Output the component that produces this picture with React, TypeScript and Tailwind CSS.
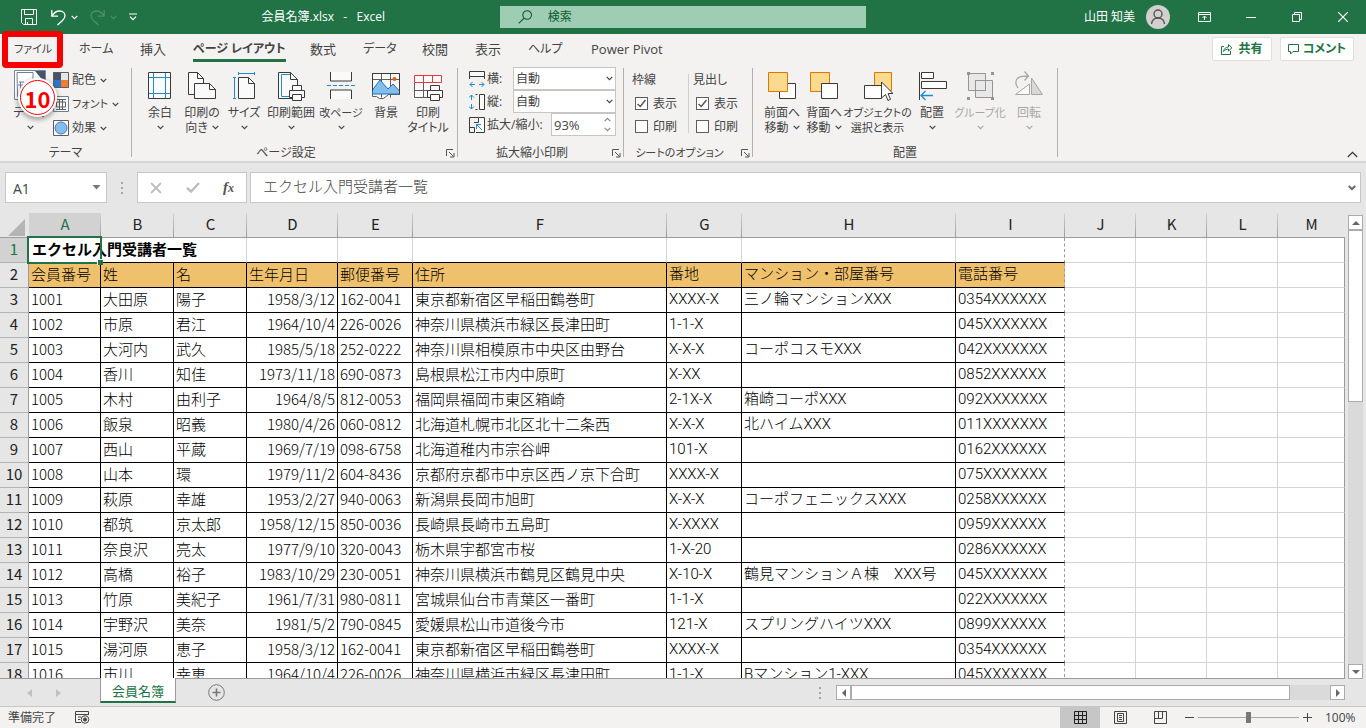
import type { ReactNode } from 'react';

const UI = 'font-["Open_Sans","Noto_Sans_CJK_JP",sans-serif]';

const tabs = [
  { name: 'ファイル', width: 'w-[65px]', size: 'text-[11px]' },
  { name: 'ホーム', width: 'w-[61px]', size: 'text-[12px]' },
  { name: '挿入', width: 'w-[53px]', size: 'text-[13px]' },
  { name: 'ページ レイアウト', width: 'w-[117px]', size: 'text-[12px]', active: true },
  { name: '数式', width: 'w-[53px]', size: 'text-[13px]' },
  { name: 'データ', width: 'w-[59px]', size: 'text-[12px]' },
  { name: '校閲', width: 'w-[53px]', size: 'text-[13px]' },
  { name: '表示', width: 'w-[53px]', size: 'text-[13px]' },
  { name: 'ヘルプ', width: 'w-[63px]', size: 'text-[12px]' },
  { name: 'Power Pivot', width: 'w-[90px]', size: 'text-[13px]' },
];

const columns = [
  { name: 'A', width: 'w-[72px]' },
  { name: 'B', width: 'w-[73px]' },
  { name: 'C', width: 'w-[73px]' },
  { name: 'D', width: 'w-[91px]' },
  { name: 'E', width: 'w-[75px]' },
  { name: 'F', width: 'w-[254px]' },
  { name: 'G', width: 'w-[75px]' },
  { name: 'H', width: 'w-[214px]' },
  { name: 'I', width: 'w-[109px]' },
  { name: 'J', width: 'w-[71px]' },
  { name: 'K', width: 'w-[71px]' },
  { name: 'L', width: 'w-[71px]' },
  { name: 'M', width: '' },
];

const headings = ['会員番号', '姓', '名', '生年月日', '郵便番号', '住所', '番地', 'マンション・部屋番号', '電話番号'];

const members = [
  ['1001', '大田原', '陽子', '1958/3/12', '162-0041', '東京都新宿区早稲田鶴巻町', 'XXXX-X', '三ノ輪マンションXXX', '0354XXXXXX'],
  ['1002', '市原', '君江', '1964/10/4', '226-0026', '神奈川県横浜市緑区長津田町', '1-1-X', '', '045XXXXXXX'],
  ['1003', '大河内', '武久', '1985/5/18', '252-0222', '神奈川県相模原市中央区由野台', 'X-X-X', 'コーポコスモXXX', '042XXXXXXX'],
  ['1004', '香川', '知佳', '1973/11/18', '690-0873', '島根県松江市内中原町', 'X-XX', '', '0852XXXXXX'],
  ['1005', '木村', '由利子', '1964/8/5', '812-0053', '福岡県福岡市東区箱崎', '2-1X-X', '箱崎コーポXXX', '092XXXXXXX'],
  ['1006', '飯泉', '昭義', '1980/4/26', '060-0812', '北海道札幌市北区北十二条西', 'X-X-X', '北ハイムXXX', '011XXXXXXX'],
  ['1007', '西山', '平蔵', '1969/7/19', '098-6758', '北海道稚内市宗谷岬', '101-X', '', '0162XXXXXX'],
  ['1008', '山本', '環', '1979/11/2', '604-8436', '京都府京都市中京区西ノ京下合町', 'XXXX-X', '', '075XXXXXXX'],
  ['1009', '萩原', '幸雄', '1953/2/27', '940-0063', '新潟県長岡市旭町', 'X-X-X', 'コーポフェニックスXXX', '0258XXXXXX'],
  ['1010', '都筑', '京太郎', '1958/12/15', '850-0036', '長崎県長崎市五島町', 'X-XXXX', '', '0959XXXXXX'],
  ['1011', '奈良沢', '亮太', '1977/9/10', '320-0043', '栃木県宇都宮市桜', '1-X-20', '', '0286XXXXXX'],
  ['1012', '高橋', '裕子', '1983/10/29', '230-0051', '神奈川県横浜市鶴見区鶴見中央', 'X-10-X', '鶴見マンションＡ棟　XXX号', '045XXXXXXX'],
  ['1013', '竹原', '美紀子', '1961/7/31', '980-0811', '宮城県仙台市青葉区一番町', '1-1-X', '', '022XXXXXXX'],
  ['1014', '宇野沢', '美奈', '1981/5/2', '790-0845', '愛媛県松山市道後今市', '121-X', 'スプリングハイツXXX', '0899XXXXXX'],
  ['1015', '湯河原', '恵子', '1958/3/12', '162-0041', '東京都新宿区早稲田鶴巻町', 'XXXX-X', '', '0354XXXXXX'],
  ['1016', '市川', '幸恵', '1964/10/4', '226-0026', '神奈川県横浜市緑区長津田町', '1-1-X', 'Bマンション1-XXX', '045XXXXXXX'],
];

function Chevron({ className = '' }: { className?: string }) {
  return (
    <svg className={`shrink-0 ${className}`} width="7" height="5" viewBox="0 0 7 5" fill="none" stroke="currentColor" strokeWidth="1.2">
      <path d="M.7.9 3.5 3.7 6.3.9" />
    </svg>
  );
}

/* ---------- title bar ---------- */

function TitleBar() {
  return (
    <header className="flex h-[34px] shrink-0 items-center bg-[#217346] text-[12px] text-white">
      <div className="flex flex-1 items-center">
        <button aria-label="上書き保存" className="ml-[21px]">
          <svg width="16" height="16" viewBox="0 0 16 16" fill="none" stroke="currentColor">
            <path d="M.5.5h15v15H2.5l-2-2zM3.5.5v5h9v-5M4.5 15.5v-6h7v6M6.500 13v2.500" />
          </svg>
        </button>
        <button aria-label="元に戻す" className="ml-[14px] flex items-center gap-[5px]">
          <svg width="15" height="17" viewBox="0 0 15 17" fill="none" stroke="currentColor" strokeWidth="1.3">
            <path d="M.8 1v6.200H7M1 7C3 3.500 6 2 8.500 2c3.500 0 5.500 2.300 5.500 4.800 0 2-1 3.200-2.500 4.700L6.500 16" />
          </svg>
          <Chevron />
        </button>
        <button aria-label="やり直し" className="ml-3 flex items-center gap-[5px] text-[#4e9069]">
          <svg width="15" height="17" viewBox="0 0 15 17" fill="none" stroke="currentColor" strokeWidth="1.3">
            <path d="M14.200 1v6.200H8M14 7C12 3.500 9 2 6.500 2 3 2 1 4.300 1 6.800c0 2 1 3.200 2.500 4.700L8.500 16" />
          </svg>
          <Chevron />
        </button>
        <button aria-label="クイック アクセス ツール バーのユーザー設定" className="ml-3">
          <svg width="8" height="8" viewBox="0 0 8 8" fill="none" stroke="currentColor" strokeWidth="1.2">
            <path d="M0 1h8M1 3.700l3 3 3-3" />
          </svg>
        </button>
        <h1 className="ml-auto mr-[115px] whitespace-pre">会員名簿.xlsx   -   Excel</h1>
      </div>
      <label className="flex h-[22px] w-[366px] items-center bg-[#9fcdb3] pl-[18px] text-[#0b5a30]">
        <svg width="16" height="16" viewBox="0 0 16 16" fill="none" stroke="currentColor" strokeWidth="1.2">
          <circle cx="10" cy="5.800" r="4.700" />
          <path d="M6.700 9.200.8 15" />
        </svg>
        <input aria-label="検索" placeholder="検索" className="ml-[15px] w-full bg-transparent outline-none placeholder:text-[#0b5a30]" />
      </label>
      <div className="flex flex-1 items-center justify-end">
        <span>山田 知美</span>
        <svg className="ml-[11px]" width="24" height="24" viewBox="0 0 24 24" fill="none" stroke="#555" strokeWidth="1.400">
          <circle cx="12" cy="12" r="12" fill="#d2d0ce" stroke="none" />
          <circle cx="12" cy="9" r="4" />
          <path d="M5.500 19c.5-4 3-6 6.500-6s6 2 6.500 6" />
        </svg>
        <button aria-label="リボンの表示オプション" className="ml-7">
          <svg width="13" height="10" viewBox="0 0 13 10" fill="none" stroke="currentColor">
            <path d="M.5.5h12v9H.5zM.5 2.500h12M6.500 8V4.200M4.500 6l2-2 2 2" />
          </svg>
        </button>
        <button aria-label="最小化" className="ml-[35px]">
          <svg width="10" height="10" viewBox="0 0 10 10" stroke="currentColor"><path d="M0 5.500h10" /></svg>
        </button>
        <button aria-label="元のサイズに戻す" className="ml-9">
          <svg width="10" height="10" viewBox="0 0 10 10" fill="none" stroke="currentColor">
            <path d="M.5 2.500h7v7h-7zM2.500 2.500v-2h7v7h-2" />
          </svg>
        </button>
        <button aria-label="閉じる" className="ml-9 mr-[18px]">
          <svg width="10" height="10" viewBox="0 0 10 10" stroke="currentColor" strokeWidth="1.200"><path d="M0 0l10 10M10 0 0 10" /></svg>
        </button>
      </div>
    </header>
  );
}

/* ---------- ribbon ---------- */

function TabStrip() {
  return (
    <nav className="relative flex h-8 items-start pl-[14px] text-[#444]">
      {tabs.map((tab) => (
        <div key={tab.name} className={`shrink-0 ${tab.width}`}>
          <button
            className={`block h-7 whitespace-nowrap border-b-3 pt-[5px] leading-[20px] ${tab.size} ${
              tab.active ? 'border-[#217346] font-bold' : 'border-transparent'
            }`}
          >
            {tab.name}
          </button>
        </div>
      ))}
      <div className="ml-auto flex gap-2 pr-3 pt-[3px] text-[12px] font-bold text-[#217346]">
        <button className="flex h-6 w-[60px] items-center justify-center gap-[5px] rounded-[2px] border border-[#e1dfdd] bg-white">
          <svg width="12" height="12" viewBox="0 0 12 12" fill="none" stroke="currentColor">
            <path d="M3 3.500H.5v8h9V8M2.500 8.500C3 5.500 5 4 7.500 4V1.500L11 4.800 7.500 8V6C5.500 6 4 6.800 2.500 8.500z" />
          </svg>
          共有
        </button>
        <button className="flex h-6 w-[74px] items-center justify-center gap-1 rounded-[2px] border border-[#e1dfdd] bg-white">
          <svg width="11" height="11" viewBox="0 0 11 11" fill="none" stroke="currentColor">
            <path d="M.5.500h10v7H5L2.500 10V7.500h-2z" />
          </svg>
          コメント
        </button>
      </div>
      {/* callout around the File tab */}
      <div className="pointer-events-none absolute -top-[3px] left-[2px] h-[37px] w-[61px] rounded-[4px] border-[6px] border-[#f60000]" />
    </nav>
  );
}

function Launcher() {
  return (
    <button aria-label="ダイアログを表示" className="absolute bottom-[3px] right-[2px]">
      <svg width="9" height="9" viewBox="0 0 9 9" fill="none" stroke="#555">
        <path d="M.5 7V.5H7M3 3l4.500 4.500M8 4v4H4" />
      </svg>
    </button>
  );
}

type GroupProps = { label: string; small?: boolean; launcher?: boolean; width: string; children: ReactNode };

function Group({ label, small, launcher, width, children }: GroupProps) {
  return (
    <>
      <section aria-label={label} className={`relative flex shrink-0 flex-col ${width}`}>
        <div className="flex flex-1">{children}</div>
        <h2 className={`text-center leading-4 ${small ? 'text-[11px]' : ''} ${launcher ? 'pr-[17px]' : ''}`}>{label}</h2>
        {launcher && <Launcher />}
      </section>
      <div className="mt-[2px] h-[89px] w-px bg-[#b3b0ad]" />
    </>
  );
}

type BigButtonProps = {
  icon: ReactNode;
  label: string;
  second?: string;
  arrow?: boolean;
  width: string;
  small?: boolean;
  disabled?: boolean;
};

function BigButton({ icon, label, second, arrow, width, small, disabled }: BigButtonProps) {
  return (
    <button
      disabled={disabled}
      className={`flex shrink-0 flex-col items-center whitespace-nowrap pt-1 leading-[15px] ${width} ${small ? 'text-[11px]' : ''} ${
        disabled ? 'text-[#a8a6a4]' : ''
      }`}
    >
      <span className="flex h-[35px] items-start">{icon}</span>
      <span>{label}</span>
      <span className="flex h-[15px] items-center gap-1">
        {second}
        {arrow && <Chevron />}
      </span>
    </button>
  );
}

function Icon({ w = 30, children, stroke = '#3b3a39' }: { w?: number; children: ReactNode; stroke?: string }) {
  return (
    <svg width={w} height="31" viewBox={`0 0 ${w} 31`} fill="none" stroke={stroke}>
      {children}
    </svg>
  );
}

const printer = (
  <g fill="#fafafa">
    <path d="M.5 5.500h15v7H.5z" />
    <path d="M3.500.5h9v5h-9zM3.500 9.500h9v6h-9z" />
  </g>
);

function ThemeGroup() {
  const items = [
    {
      name: '配色',
      icon: (
        <g stroke="none">
          <path fill="#44546a" d="M0 0h8v8H0z" />
          <path fill="#e7e6e6" d="M8 0h8v8H8z" />
          <path fill="#2e75c6" d="M0 8h8v8H0z" />
          <path fill="#ed7d31" d="M8 8h8v8H8z" />
          <path d="M.5.5h15v15H.5z" fill="none" stroke="#605e5c" />
        </g>
      ),
    },
    {
      name: 'フォント',
      icon: (
        <g>
          <path d="M.5.5h15v15H.5z" fill="#fafafa" stroke="#6a7f9a" />
          <path d="M3 3.500h10M3 13.500h10M6.500 3.500v10M9.500 3.500v10M3.500 6h9v5h-9z" stroke="#605e5c" />
        </g>
      ),
    },
    {
      name: '効果',
      icon: (
        <g>
          <path d="M.5.5h15v15H.5z" fill="#fafafa" stroke="#605e5c" />
          <circle cx="8" cy="8" r="6" fill="#83beec" stroke="#4a7ebf" />
        </g>
      ),
    },
  ];
  return (
    <Group label="テーマ" width="w-[131px]">
      <div className="relative flex w-[53px] justify-center pl-[7px]">
        <BigButton
          width="w-[46px]"
          label="テーマ"
          arrow
          icon={
            <Icon w={32}>
              <path d="M.5.5h31v29H.5z" fill="#fff" stroke="#7a8797" />
              <path d="M21 1h10v12z" fill="#44546a" stroke="none" />
              <path d="M3 2.500h16v24H3.500zM4 15h5M6.500 12v9M5 12h5" stroke="#6a7f9a" />
            </Icon>
          }
        />
        <div className="absolute left-[18px] top-3 flex size-[39px] items-center justify-center rounded-full bg-white p-[2px] shadow-[0_2px_4px_1px_rgba(0,0,0,0.3)]">
          <span className="flex size-full items-center justify-center rounded-full border border-[#f60000] font-['Noto_Sans_CJK_JP',sans-serif] text-[22px] font-bold leading-none text-[#f60000]">
            10
          </span>
        </div>
      </div>
      <div className="flex flex-col pt-[2px]">
        {items.map((item) => (
          <button key={item.name} className="flex h-6 items-center gap-[3px]">
            <svg width="16" height="16" viewBox="0 0 16 16" fill="none">{item.icon}</svg>
            <span className={item.name === 'フォント' ? 'text-[11px]' : ''}>{item.name}</span>
            <Chevron className="ml-px" />
          </button>
        ))}
      </div>
    </Group>
  );
}

function PageSetupGroup() {
  const pageFill = '#fafafa';
  return (
    <Group label="ページ設定" launcher width="w-[325px]">
      <div className="flex pl-[7px]">
        <BigButton width="w-[42px]" label="余白" arrow icon={
          <Icon w={24}>
            <path d="M.5 2.500h22v26H.5z" fill={pageFill} />
            <path d="M5.500 3v25M17.500 3v25M1 7.500h21M1 23.500h21" stroke="#1e8bcd" />
          </Icon>
        } />
        <BigButton width="w-[42px]" label="印刷の" second="向き" arrow icon={
          <Icon>
            <path d="M1.500 2.500h9l6 6v16h-15z" fill={pageFill} />
            <path d="M10.500 2.500v6h6" />
            <path d="M7.500 13.500h15l6 6v9h-21z" fill={pageFill} />
            <path d="M22.500 13.500v6h6" />
          </Icon>
        } />
        <BigButton width="w-[42px]" label="サイズ" arrow icon={
          <Icon w={24}>
            <path d="M6.500 7.500h10l6 6v15h-16z" fill={pageFill} />
            <path d="M16.500 7.500v6h6" />
            <path d="M7 3.500h15M6.500 2v3M22.500 2v3M2.500 8v20M1 7.500h3M1 28.500h3" stroke="#1e8bcd" />
          </Icon>
        } />
        <BigButton width="w-[52px]" label="印刷範囲" arrow icon={
          <Icon>
            <path d="M2.500 2.500h12l7 7v19h-19z" fill={pageFill} />
            <path d="M14.500 2.500v7h7" />
            <path d="M14 4.500H5.500v22H14" stroke="#1e8bcd" />
            <g transform="translate(13 15)">{printer}</g>
          </Icon>
        } />
        <BigButton width="w-[48px]" label="改ページ" small arrow icon={
          <Icon>
            <path d="M4.500 2v9h21V2M4.500 29v-9h21v9" fill={pageFill} />
            <path d="M1 15.500h28" stroke="#1e8bcd" strokeDasharray="4 2" />
          </Icon>
        } />
        <BigButton width="w-[42px]" label="背景" icon={
          <Icon>
            <path d="M1.500 3.500h27v21h-11l-5 4h-4l-3-2h-4zM1.500 9.500h27M10.500 3.500v24M19.500 3.500v24" fill={pageFill} stroke="#605e5c" />
            <path d="M1.500 20 9 10l8 9 5-5 6.500 7v3h-27z" fill="#83beec" stroke="#1e70b8" />
            <circle cx="23.500" cy="9" r="2" fill="#e8590c" stroke="none" />
            <path d="M1.500 21V3.500h27v21" />
          </Icon>
        } />
        <BigButton width="w-[42px]" label="印刷" second="タイトル" icon={
          <Icon>
            <path d="M1.500 5.500h27v21h-27z" fill={pageFill} stroke="none" />
            <path d="M1.500 13v14.500h14M1.500 20.500h14M10.500 13v14" stroke="#605e5c" />
            <path d="M1.500 5.500h27v7h-27zM10.500 5.500v7M19.500 5.500v7" stroke="#e8383d" />
            <g transform="translate(14 15)">{printer}</g>
          </Icon>
        } />
      </div>
    </Group>
  );
}

function ScaleGroup() {
  const rows = [
    {
      id: 'fit-w',
      name: '横:',
      icon: (
        <>
          <path d="M.5.5h15v5H.5z" fill="#fafafa" />
          <path d="M.5 8V5.500h15V8" />
          <path d="M1 13.500h5M10 13.500h5M3.500 11 1 13.500 3.500 16M12.500 11l2.500 2.500-2.500 2.500" stroke="#1e8bcd" />
        </>
      ),
    },
    {
      id: 'fit-h',
      name: '縦:',
      icon: (
        <>
          <path d="M10.500.5h5v15h-5z" fill="#fafafa" />
          <path d="M8.500.5h-2M8.500 15.500h-2" />
          <path d="M2.500 1v5M2.500 10v5M0 3.500 2.500 1 5 3.500M0 12.500 2.500 15 5 12.500" stroke="#1e8bcd" />
        </>
      ),
    },
  ];
  return (
    <Group label="拡大縮小印刷" launcher width="w-[165px]">
      <div className="flex flex-1 flex-col pl-[11px] pr-[7px] pt-px">
        {rows.map((row) => (
          <div key={row.id} className="flex h-[23px] items-center">
            <svg className="shrink-0" width="16" height="16" viewBox="0 0 16 16" fill="none" stroke="#3b3a39">{row.icon}</svg>
            <label htmlFor={row.id} className="ml-[2px] w-[26px]">{row.name}</label>
            <div className="relative h-full flex-1">
              <select id={row.id} className="h-full w-full appearance-none border border-[#c8c6c4] bg-white pl-[2px]">
                <option>自動</option>
              </select>
              <Chevron className="pointer-events-none absolute right-[3px] top-[9px]" />
            </div>
          </div>
        ))}
        <div className="flex h-[23px] items-center">
          <svg className="shrink-0" width="16" height="16" viewBox="0 0 16 16" fill="none" stroke="#3b3a39">
            <path d="M10 .5h5.500v15H7" fill="#fafafa" />
            <path d="M.5 5V.5h9v5H5M.5 5v10.500h5v-5h-5" />
            <path d="M13 13 7.500 7.500M7.500 12V7.500H12" stroke="#1e8bcd" />
          </svg>
          <label htmlFor="scale" className="ml-[2px] w-[64px] whitespace-nowrap">拡大/縮小:</label>
          <div className="relative h-full flex-1">
            <input id="scale" defaultValue="93%" className="h-full w-full border border-[#c8c6c4] bg-white pl-[2px] text-[13px]" />
            <Chevron className="pointer-events-none absolute right-[5px] top-1 rotate-180 text-[#888]" />
            <Chevron className="pointer-events-none absolute bottom-1 right-[5px] text-[#888]" />
          </div>
        </div>
      </div>
    </Group>
  );
}

function Check({ label, checked }: { label: string; checked?: boolean }) {
  return (
    <label className="flex h-[23px] items-center gap-[5px] pl-[3px]">
      <span className="relative size-[13px]">
        <input type="checkbox" defaultChecked={checked} className="peer block size-[13px] appearance-none border border-[#605e5c] bg-white" />
        <svg className="pointer-events-none absolute left-[2px] top-[2px] hidden peer-checked:block" width="9" height="9" viewBox="0 0 9 9" fill="none" stroke="#555" strokeWidth="1.500">
          <path d="M.5 5 3.300 7.500 8.500 1" />
        </svg>
      </span>
      {label}
    </label>
  );
}

function SheetOptionsGroup() {
  return (
    <Group label="シートのオプション" small launcher width="w-[128px]">
      <fieldset className="w-14 pl-2 pt-[2px]">
        <legend className="float-left h-6 w-full leading-6">枠線</legend>
        <Check label="表示" checked />
        <Check label="印刷" />
      </fieldset>
      <div className="ml-2 mt-2 h-[59px] w-px bg-[#d2d0ce]" />
      <fieldset className="w-14 pl-1 pt-[2px]">
        <legend className="float-left h-6 w-full leading-6">見出し</legend>
        <Check label="表示" checked />
        <Check label="印刷" />
      </fieldset>
    </Group>
  );
}

function ArrangeGroup() {
  const orange = { fill: '#f8db8f', stroke: '#e07500' };
  return (
    <Group label="配置" width="w-[304px]">
      <div className="flex pl-2">
        <BigButton width="w-[42px]" label="前面へ" second="移動" arrow icon={
          <Icon>
            <path d="M12.500 13.500h16v15h-16z" fill="#fff" />
            <path d="M1.500 2.500h19v19h-19z" {...orange} />
          </Icon>
        } />
        <BigButton width="w-[42px]" label="背面へ" second="移動" arrow icon={
          <Icon>
            <path d="M1.500 2.500h19v19h-19z" {...orange} />
            <path d="M12.500 13.500h16v15h-16z" fill="#fff" />
          </Icon>
        } />
        <BigButton width="w-[65px]" label="オブジェクトの" second="選択と表示" small icon={
          <Icon>
            <path d="M11.500 2.500h17v18h-17z" {...orange} />
            <path d="M1.500 15.500h17v13h-17z" fill="#fff" />
            <path d="M18.500 12v16l4-3.500 2.500 6 2.500-1.200-2.500-5.800h5z" fill="#fff" />
          </Icon>
        } />
        <BigButton width="w-[44px]" label="配置" arrow icon={
          <Icon>
            <path d="M2.500 2v28" />
            <path d="M4.500 2.500h12v6h-12zM4.500 11.500h25v7h-25z" fill="#fff" />
            <path d="M4 25.500h12M8.500 21 4 25.500 8.500 30" stroke="#1e8bcd" strokeWidth="1.300" />
          </Icon>
        } />
        <BigButton width="w-[52px]" label="グループ化" arrow small disabled icon={
          <Icon stroke="#979593">
            <path d="M3.500 3.500h17v17h-17zM10.500 10.500h17v17h-17z" fill="#e8e8e8" />
            <path d="M10.500 10.500h10v10h-10z" />
            <path d="M2 2h3v3H2zM26 2h3v3h-3zM2 27h3v3H2zM26 27h3v3h-3z" fill="#979593" stroke="none" />
          </Icon>
        } />
        <BigButton width="w-[46px]" label="回転" arrow disabled icon={
          <Icon stroke="#a8a6a4">
            <path d="M1.500 24.500h14V14z" fill="#fafafa" />
            <path d="M17.500 8v16.500h11z" fill="#d8d8d8" />
            <path d="M4 18C1 14 1 10 4.500 7.500 7 6 10 6 14 6M10.500 1.500l4 4.500-4 4.500" strokeWidth="1.300" />
          </Icon>
        } />
      </div>
    </Group>
  );
}

function Ribbon() {
  return (
    <div className="shrink-0 bg-[#f3f2f1]">
      <TabStrip />
      <div className="relative flex h-[95px] text-[12px] text-[#444]">
        <ThemeGroup />
        <PageSetupGroup />
        <ScaleGroup />
        <SheetOptionsGroup />
        <ArrangeGroup />
        <button aria-label="リボンを折りたたむ" className="absolute bottom-[3px] right-2">
          <svg width="11" height="7" viewBox="0 0 11 7" fill="none" stroke="#333" strokeWidth="1.200"><path d="M.8 6 5.500 1.300 10.200 6" /></svg>
        </button>
      </div>
    </div>
  );
}

/* ---------- formula bar ---------- */

function FormulaBar() {
  return (
    <div className="flex h-[52px] shrink-0 border-t-2 border-[#d6d6d6] px-[5px] pb-[10px] pt-[9px] text-[#444]">
      <div className="flex w-[102px] shrink-0 items-center border border-[#c6c6c6] bg-white pr-[5px]">
        <input aria-label="名前ボックス" defaultValue="A1" className="w-full min-w-0 bg-transparent pl-[7px] pt-[2px] text-[14px] outline-none" />
        <svg className="shrink-0" width="9" height="5" viewBox="0 0 9 5" fill="#777"><path d="M.5 0h8l-4 4.500z" /></svg>
      </div>
      <svg className="ml-[14px] mr-[13px] shrink-0 self-center" width="3" height="12" viewBox="0 0 3 12" fill="#a6a6a6">
        <path d="M0 0h2v2H0zM0 5h2v2H0zM0 10h2v2H0z" />
      </svg>
      <div className="flex w-[110px] shrink-0 items-center justify-between border border-[#c6c6c6] bg-white pl-3 pr-3">
        <button aria-label="キャンセル">
          <svg width="12" height="12" viewBox="0 0 12 12" stroke="#bdbdbd" strokeWidth="1.800"><path d="M1 1l10 10M11 1 1 11" /></svg>
        </button>
        <button aria-label="入力">
          <svg width="14" height="11" viewBox="0 0 14 11" fill="none" stroke="#bdbdbd" strokeWidth="2.400"><path d="M1 6l4 3.500L13 1" /></svg>
        </button>
        <button aria-label="関数の挿入" className="font-['Liberation_Serif',serif] text-[15px] font-bold italic leading-4 text-[#555]">
          f<span className="text-[12px]">x</span>
        </button>
      </div>
      <div className="ml-[3px] flex flex-1 items-center border border-[#c6c6c6] bg-white pr-1">
        <input
          aria-label="数式バー"
          defaultValue="エクセル入門受講者一覧"
          className="w-full bg-transparent pb-[3px] pl-3 font-['Noto_Sans_CJK_JP',sans-serif] text-[15px] font-light outline-none [font-feature-settings:normal]"
        />
        <svg width="8" height="6" viewBox="0 0 8 6" fill="none" stroke="#666" strokeWidth="2"><path d="M.8 1 4 4.200 7.200 1" /></svg>
      </div>
    </div>
  );
}

/* ---------- worksheet ---------- */

function cellBorder(col: number, row: number) {
  const bottom = col <= 8 ? 'border-b-black' : 'border-b-[#d4d4d4]';
  if (col === 8) return `${bottom} border-r border-dashed border-r-[#9b9b9b] [border-bottom-style:solid]`;
  if (col < 8 && row > 1) return `${bottom} border-r border-r-black`;
  if (col === 12) return `${bottom} border-r border-r-[#9b9b9b]`;
  return `${bottom} border-r border-r-[#d4d4d4]`;
}

function RowHeader({ row }: { row: number }) {
  return (
    <th
      scope="row"
      className={`h-[25px] border-b border-r border-b-[#b4b4b4] border-r-[#9b9b9b] p-0 text-center align-top font-normal ${
        row === 1 ? 'bg-[#d2d2d2] text-[#217346]' : 'bg-[#e6e6e6] text-[#222]'
      }`}
    >
      {row}
    </th>
  );
}

function Sheet() {
  const rows = [headings, ...members];
  return (
    <div className="relative min-w-0 flex-1 overflow-hidden border-b border-[#9b9b9b]">
      <table className="w-full table-fixed border-separate border-spacing-0 font-['Noto_Sans_CJK_JP',sans-serif] text-[15px] leading-[22px] text-black">
        <colgroup>
          <col className="w-[29px]" />
          {columns.map((c) => <col key={c.name} className={c.width} />)}
        </colgroup>
        <thead>
          <tr className="h-[25px] bg-[#e6e6e6]">
            <th className="border-b border-b-[#9b9b9b] p-0">
              <svg className="ml-2 mt-1" width="17" height="17" viewBox="0 0 17 17" fill="#b4b4b4"><path d="M17 0v17H0z" /></svg>
            </th>
            {columns.map((c) => (
              <th
                key={c.name}
                scope="col"
                className={`relative border-b border-b-[#9b9b9b] p-0 align-top font-normal after:absolute after:right-0 after:top-0 after:h-full after:w-px after:bg-linear-to-b after:from-[#d4d4d4] after:to-[#9b9b9b] last:after:hidden ${
                  c.name === 'A' ? 'bg-[#d2d2d2] text-[#217346]' : 'text-[#222]'
                }`}
              >
                {c.name}
              </th>
            ))}
          </tr>
        </thead>
        <tbody>
          <tr className="bg-white">
            <RowHeader row={1} />
            <td colSpan={3} className="border-b border-r border-b-black border-r-[#d4d4d4] p-0 pl-[3px] align-top font-bold">
              エクセル入門受講者一覧
            </td>
            {columns.slice(3).map((c, i) => <td key={c.name} className={`border-b p-0 ${cellBorder(i + 3, 1)}`} />)}
          </tr>
          {rows.map((cells, r) => (
            <tr key={r} className="bg-white font-light">
              <RowHeader row={r + 2} />
              {columns.map((c, i) => (
                <td
                  key={c.name}
                  className={`whitespace-nowrap border-b px-[2px] py-0 align-top ${cellBorder(i, r + 2)} ${
                    r === 0 && i < 9 ? 'bg-[#f0c16d]' : ''
                  } ${r > 0 && i === 3 ? 'text-right' : ''} ${i >= 6 ? "font-['Roboto','Noto_Sans_CJK_JP',sans-serif]" : ''}`}
                >
                  {cells[i]}
                </td>
              ))}
            </tr>
          ))}
        </tbody>
      </table>
      {/* active cell outline with its fill handle */}
      <div className="pointer-events-none absolute left-[27px] top-[23px] h-[28px] w-[75px] border-2 border-[#217346]">
        <span className="absolute -bottom-[3px] -right-[3px] size-[6px] border-l border-t border-white bg-[#217346]" />
      </div>
    </div>
  );
}

function ArrowButton({ label, d, className = '' }: { label: string; d: string; className?: string }) {
  return (
    <button aria-label={label} className={`flex size-[15px] shrink-0 items-center justify-center border border-[#ababab] bg-white ${className}`}>
      <svg width="8" height="8" viewBox="0 0 8 8" fill="#666"><path d={d} /></svg>
    </button>
  );
}

function VerticalScroll() {
  return (
    <div className="flex w-[21px] shrink-0 flex-col pl-[3px] pt-[2px]">
      <div className="flex w-[15px] flex-1 flex-col bg-[#dadada]">
        <ArrowButton label="上へスクロール" d="M4 2l4 4H0z" />
        <div className="h-[172px] border border-[#ababab] bg-white" />
        <ArrowButton label="下へスクロール" d="M4 6 0 2h8z" className="mt-auto" />
      </div>
    </div>
  );
}

function SheetTabs() {
  return (
    <div className="flex h-[27px] shrink-0 items-start">
      <div className="flex w-[100px] shrink-0 items-center gap-6 self-center pl-[27px]">
        <button aria-label="前のシート"><svg width="5" height="8" viewBox="0 0 5 8" fill="#c0c0c0"><path d="M5 0v8L0 4z" /></svg></button>
        <button aria-label="次のシート"><svg width="5" height="8" viewBox="0 0 5 8" fill="#c0c0c0"><path d="M0 0v8l5-4z" /></svg></button>
      </div>
      <button className="z-10 -mt-px h-[25px] w-[76px] border-x border-b-2 border-x-[#9b9b9b] border-b-[#217346] bg-white pt-[2px] text-[13px] leading-5 text-[#217346]">
        会員名簿
      </button>
      <button aria-label="新しいシート" className="ml-8 self-center">
        <svg width="17" height="17" viewBox="0 0 17 17" fill="none" stroke="#777">
          <circle cx="8.500" cy="8.500" r="7.800" />
          <path d="M8.500 4.500v8M4.500 8.500h8" strokeWidth="1.600" />
        </svg>
      </button>
      <svg className="ml-auto mr-[15px] self-center" width="2" height="12" viewBox="0 0 2 12" fill="#a6a6a6">
        <path d="M0 0h2v2H0zM0 5h2v2H0zM0 10h2v2H0z" />
      </svg>
      <div className="mr-[21px] mt-[6px] flex w-[509px] bg-[#dadada]">
        <ArrowButton label="左へスクロール" d="M2 4l4-4v8z" />
        <div className="h-[15px] w-[439px] border border-[#ababab] bg-white" />
        <ArrowButton label="右へスクロール" d="M6 4 2 8V0z" className="ml-auto" />
      </div>
    </div>
  );
}

function StatusBar() {
  return (
    <footer className="flex h-[22px] shrink-0 items-center border-t border-[#c6c6c6] bg-[#f3f2f1] text-[12px] text-[#444]">
      <span className="ml-2">準備完了</span>
      <svg className="ml-[19px]" width="15" height="13" viewBox="0 0 15 13" fill="none" stroke="#444">
        <path d="M6 11.500H.5V.5h13V4M.5 3.500h13M3 6h3M3 8.500h2" />
        <circle cx="10" cy="8.500" r="3.800" />
        <circle cx="10" cy="8.500" r="1.600" fill="#444" />
      </svg>
      <div className="ml-auto flex h-full items-center">
        <button aria-label="標準" className="flex h-full w-10 items-center justify-center bg-[#c6c6c6]">
          <svg width="13" height="13" viewBox="0 0 13 13" fill="none" stroke="#222"><path d="M.5.500h12v12H.5zM4.500.5v12M8.500.5v12M.5 4.500h12M.5 8.500h12" /></svg>
        </button>
        <button aria-label="ページ レイアウト" className="flex h-full w-10 items-center justify-center">
          <svg width="13" height="13" viewBox="0 0 13 13" fill="none" stroke="#444"><path d="M.5.500h12v12H.5zM3.500 2.500h6v8h-6zM5 4.500h3M5 6.500h3M5 8.500h3" /></svg>
        </button>
        <button aria-label="改ページ プレビュー" className="flex h-full w-10 items-center justify-center">
          <svg width="13" height="13" viewBox="0 0 13 13" fill="none" stroke="#444"><path d="M.5.500h12v12H.5zM.5 7.500h8v-7M4.500.5v7" /></svg>
        </button>
        <button aria-label="縮小" className="ml-[5px]"><svg width="9" height="9" viewBox="0 0 9 9" stroke="#444"><path d="M0 4.500h9" /></svg></button>
        <input
          type="range"
          aria-label="ズーム"
          min={10}
          max={190}
          defaultValue={100}
          className="mx-1 h-3 w-[101px] appearance-none bg-transparent [&::-webkit-slider-runnable-track]:h-px [&::-webkit-slider-runnable-track]:bg-[#a6a6a6] [&::-webkit-slider-thumb]:-mt-[5px] [&::-webkit-slider-thumb]:h-[11px] [&::-webkit-slider-thumb]:w-[5px] [&::-webkit-slider-thumb]:appearance-none [&::-webkit-slider-thumb]:bg-[#777]"
        />
        <button aria-label="拡大"><svg width="9" height="9" viewBox="0 0 9 9" stroke="#444"><path d="M0 4.500h9M4.500 0v9" /></svg></button>
        <span className="ml-[13px] w-[41px]">100%</span>
      </div>
    </footer>
  );
}

export default function App() {
  return (
    <div className={`flex h-screen flex-col overflow-hidden bg-[#e6e6e6] [font-feature-settings:'palt'] ${UI}`}>
      <TitleBar />
      <Ribbon />
      <FormulaBar />
      <main className="flex min-h-0 flex-1 [font-feature-settings:normal]">
        <Sheet />
        <VerticalScroll />
      </main>
      <SheetTabs />
      <StatusBar />
    </div>
  );
}
